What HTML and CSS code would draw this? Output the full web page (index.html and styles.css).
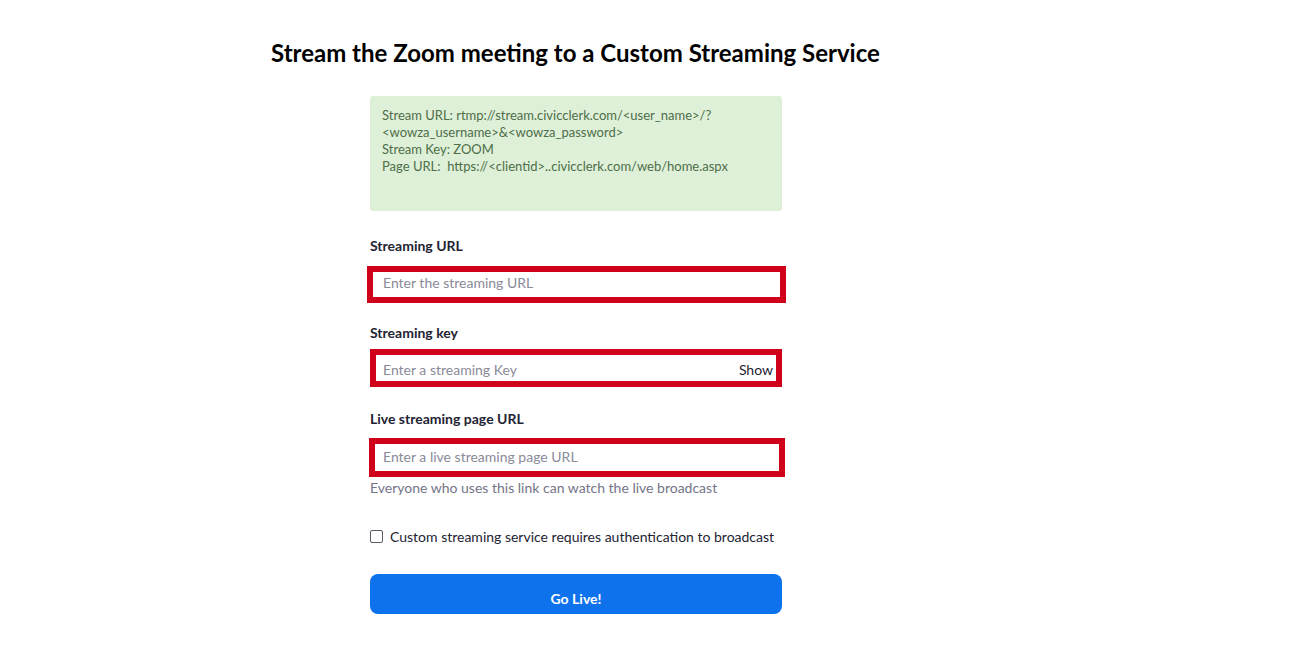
FILE: index.html
```html
<!DOCTYPE html>
<html>
<head>
<meta charset="utf-8">
<link rel="stylesheet" href="styles.css">
</head>
<body>
<div class="page">
  <h1 class="title">Stream the Zoom meeting to a Custom Streaming Service</h1>
  <div class="form">
    <div class="notice">
      Stream URL: rtmp://stream.civicclerk.com/&lt;user_name&gt;/?<br>
      &lt;wowza_username&gt;&amp;&lt;wowza_password&gt;<br>
      Stream Key: ZOOM<br>
      Page URL:&nbsp; https://&lt;clientid&gt;..civicclerk.com/web/home.aspx
    </div>
    <label class="label label-first">Streaming URL</label>
    <div class="field field-url"><span class="ph">Enter the streaming URL</span></div>
    <label class="label label-key">Streaming key</label>
    <div class="field field-key"><span class="ph">Enter a streaming Key</span><span class="show">Show</span></div>
    <label class="label label-page">Live streaming page URL</label>
    <div class="field field-page"><span class="ph">Enter a live streaming page URL</span></div>
    <div class="help">Everyone who uses this link can watch the live broadcast</div>
    <div class="check-row"><span class="checkbox"></span><span class="check-label">Custom streaming service requires authentication to broadcast</span></div>
    <button class="golive">Go Live!</button>
  </div>
</div>
</body>
</html>
```

FILE: styles.css
```css
html, body {
  margin: 0;
  padding: 0;
  background: #ffffff;
}
body {
  font-family: Lato, "Open Sans", sans-serif;
  color: #232333;
}
.page {
  padding-top: 38px;
  margin-left: 271px;
}
.title {
  margin: 0;
  font-size: 24px;
  line-height: 30px;
  font-weight: 700;
  color: #000000;
  white-space: nowrap;
}
.form {
  margin-left: 99px;
  width: 412px;
  display: flex;
  flex-direction: column;
}
.notice {
  margin-top: 28px;
  box-sizing: border-box;
  height: 115px;
  background: #dff0d8;
  border-radius: 3px;
  padding: 11px 12px 10px;
  font-size: 13px;
  line-height: 17px;
  color: #4d6e49;
}
.label {
  font-size: 14px;
  font-weight: 700;
  line-height: 18px;
  color: #232333;
}
.label-first { margin-top: 26px; }
.label-key { margin-top: 21px; }
.label-page { margin-top: 23px; }
.field {
  box-sizing: border-box;
  height: 38px;
  border: 6px solid #d0021b;
  background: #fff;
  display: flex;
  align-items: center;
  justify-content: space-between;
  font-size: 14px;
  line-height: 18px;
}
.field-url {
  margin-top: 11px;
  margin-left: -3px;
  width: 419px;
  height: 37px;
  padding-left: 10px;
  padding-bottom: 3px;
}
.field-key {
  margin-top: 7px;
  width: 412px;
  padding-left: 7px;
  padding-right: 3px;
  padding-top: 4px;
}
.field-page {
  margin-top: 10px;
  margin-left: -1px;
  width: 416px;
  padding-left: 8px;
  height: 39px;
  padding-bottom: 2px;
}
.ph {
  color: #8a8a99;
}
.show {
  color: #232333;
}
.help {
  margin-top: 1px;
  font-size: 14px;
  line-height: 20px;
  color: #747487;
}
.check-row {
  margin-top: 28px;
  display: flex;
  align-items: center;
  height: 20px;
}
.checkbox {
  box-sizing: border-box;
  width: 13px;
  height: 13px;
  border: 1px solid #5a5a66;
  border-radius: 2px;
  margin-right: 7px;
  background: #fff;
}
.check-label {
  font-size: 14px;
  color: #232333;
}
.golive {
  margin-top: 28px;
  height: 40px;
  width: 412px;
  border: none;
  border-radius: 8px;
  background: #0e72ed;
  color: #fff;
  font-family: Lato, "Open Sans", sans-serif;
  font-size: 14px;
  font-weight: 700;
  padding: 8px 0 0;
}
```
